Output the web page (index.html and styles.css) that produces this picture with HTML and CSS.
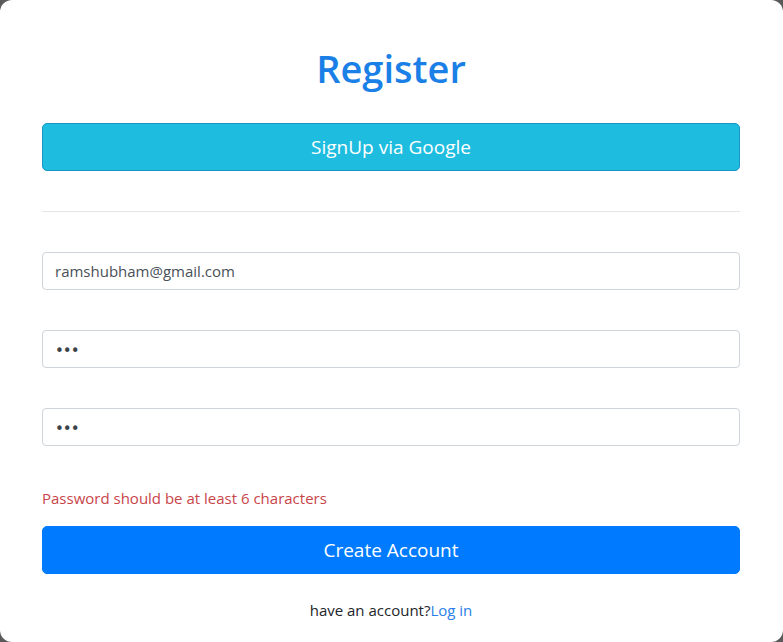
FILE: index.html
```html
<!DOCTYPE html>
<html>
<head>
<meta charset="utf-8">
<link rel="stylesheet" href="styles.css">
</head>
<body>
<div class="card">
  <h1 class="title">Register</h1>
  <button class="btn btn-google">SignUp via Google</button>
  <hr class="divider">
  <form class="form">
    <input class="field" type="email" value="ramshubham@gmail.com">
    <input class="field field-secret" type="password" value="123">
    <input class="field field-secret" type="password" value="123">
    <p class="error">Password should be at least 6 characters</p>
    <button class="btn btn-primary" type="button">Create Account</button>
  </form>
  <p class="footer">have an account?<a href="#" class="link">Log in</a></p>
</div>
</body>
</html>
```

FILE: styles.css
```css
* { box-sizing: border-box; }
html, body {
  margin: 0;
  padding: 0;
  background: #5a5a5a;
}
body {
  font-family: "Open Sans", "Noto Sans", sans-serif;
  color: #212529;
}
.card {
  width: 783px;
  height: 642px;
  background: #fff;
  border-radius: 12px;
  padding: 44px 43px 0 42px;
  display: flex;
  flex-direction: column;
}
.title {
  margin: 0;
  text-align: center;
  font-size: 38px;
  line-height: 48px;
  font-weight: 600;
  color: #1a7fe6;
}
.btn {
  display: block;
  width: 100%;
  height: 48px;
  border-radius: 5px;
  font-family: inherit;
  font-size: 19px;
  color: #fff;
  cursor: pointer;
}
.btn-google {
  margin-top: 31px;
  background: #1ebde0;
  border: 1px solid #1a95c4;
}
.divider {
  margin: 40px 0 0;
  border: 0;
  border-top: 1px solid #e6e6e6;
  height: 0;
}
.form {
  display: flex;
  flex-direction: column;
  margin-top: 40px;
}
.field {
  height: 38px;
  border: 1px solid #ced4da;
  border-radius: 4px;
  padding: 0 12px;
  font-family: inherit;
  font-size: 15px;
  color: #495057;
  margin-bottom: 40px;
}
.field-secret {
  font-family: "DejaVu Sans", sans-serif;
  font-size: 15px;
  letter-spacing: -1px;
  color: #3d4349;
  padding-top: 4px;
}
.field:last-of-type { margin-bottom: 0; }
.error {
  margin: 42px 0 0;
  font-size: 15px;
  line-height: 20px;
  color: #c8454a;
}
.btn-primary {
  margin-top: 18px;
  background: #007bff;
  border: 1px solid #007bff;
}
.footer {
  margin: 26px 0 0;
  text-align: center;
  font-size: 15px;
  line-height: 20px;
  color: #212529;
}
.link {
  color: #2a80e6;
  text-decoration: none;
}
```
